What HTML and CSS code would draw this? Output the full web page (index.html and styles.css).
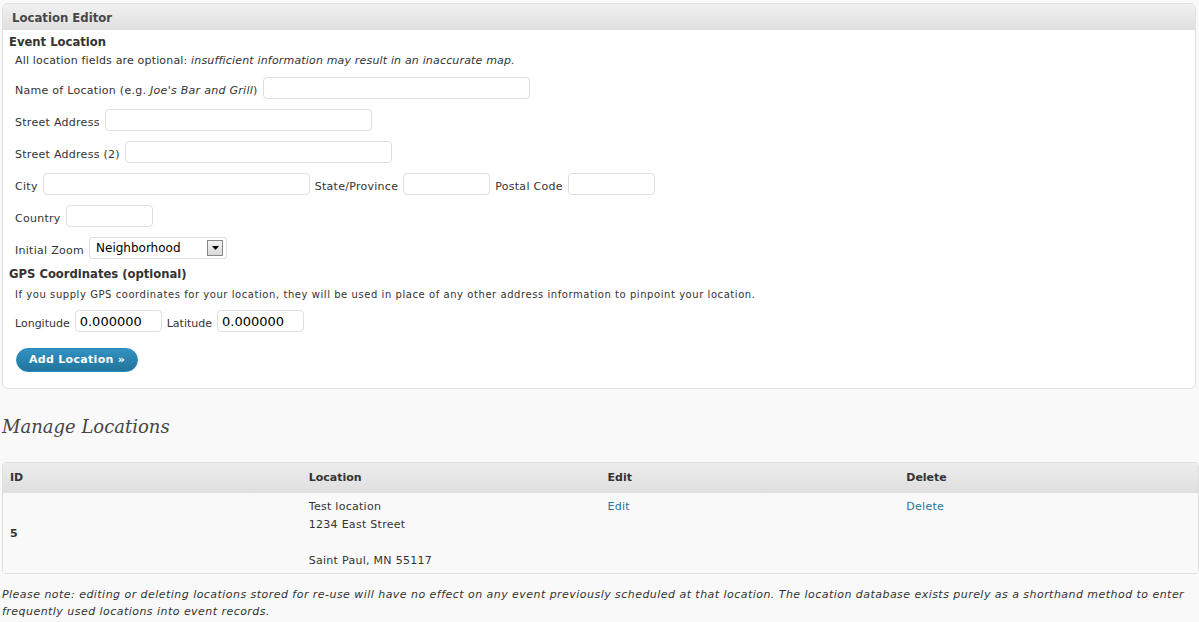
FILE: index.html
```html
<!DOCTYPE html>
<html>
<head>
<meta charset="utf-8">
<link rel="stylesheet" href="styles.css">
</head>
<body>
<div class="editor">
  <div class="editor-head">Location Editor</div>
  <div class="editor-body">
    <div class="section-title">Event Location</div>
    <div class="intro">All location fields are optional: <em>insufficient information may result in an inaccurate map.</em></div>
    <div class="row first">
      <label class="lbl">Name of Location (e.g. <em>Joe's Bar and Grill</em>)</label>
      <span class="input wide"></span>
    </div>
    <div class="row">
      <label class="lbl">Street Address</label>
      <span class="input wide"></span>
    </div>
    <div class="row">
      <label class="lbl">Street Address (2)</label>
      <span class="input wide"></span>
    </div>
    <div class="row">
      <label class="lbl">City</label>
      <span class="input wide"></span>
      <label class="lbl">State/Province</label>
      <span class="input small"></span>
      <label class="lbl">Postal Code</label>
      <span class="input small"></span>
    </div>
    <div class="row">
      <label class="lbl">Country</label>
      <span class="input small"></span>
    </div>
    <div class="row select-row">
      <label class="lbl">Initial Zoom</label>
      <span class="select"><span class="select-text">Neighborhood</span><span class="select-btn"><svg width="7" height="4" viewBox="0 0 7 4"><path d="M0 0h7L3.5 4z" fill="#000"/></svg></span></span>
    </div>
    <div class="section-title gps">GPS Coordinates (optional)</div>
    <div class="gps-note">If you supply GPS coordinates for your location, they will be used in place of any other address information to pinpoint your location.</div>
    <div class="row coords">
      <label class="lbl">Longitude</label>
      <span class="input coord">0.000000</span>
      <label class="lbl">Latitude</label>
      <span class="input coord">0.000000</span>
    </div>
    <div class="actions"><span class="button">Add Location &raquo;</span></div>
  </div>
</div>

<h2 class="page-title">Manage Locations</h2>

<table class="locations">
  <thead>
    <tr><th>ID</th><th>Location</th><th>Edit</th><th>Delete</th></tr>
  </thead>
  <tbody>
    <tr>
      <td class="id">5</td>
      <td class="loc">Test location<br>1234 East Street<br><br>Saint Paul, MN 55117</td>
      <td class="act"><a href="#">Edit</a></td>
      <td class="act"><a href="#">Delete</a></td>
    </tr>
  </tbody>
</table>

<p class="note">Please note: editing or deleting locations stored for re-use will have no effect on any event previously scheduled at that location. The location database exists purely as a shorthand method to enter frequently used locations into event records.</p>
</body>
</html>
```
FILE: styles.css
```css
html, body {
  margin: 0;
  padding: 0;
}
body {
  background: #f9f9f9;
  color: #333;
  font-family: "DejaVu Sans", Verdana, sans-serif;
  font-size: 11px;
  letter-spacing: 0.28px;
  padding: 3px 0 0 2px;
}
.editor {
  margin-right: 3px;
  background: #fff;
  border: 1px solid #dfdfdf;
  border-radius: 6px;
}
.editor-head {
  height: 26px;
  line-height: 28px;
  padding: 0 9px;
  font-size: 11.7px;
  font-weight: bold;
  letter-spacing: 0;
  color: #464646;
  background: linear-gradient(#f1f1f1, #dfdfdf);
  border-radius: 5px 5px 0 0;
}
.editor-body {
  padding: 4px 6px 16px 6px;
}
.section-title {
  font-size: 11.6px;
  font-weight: bold;
  line-height: 16px;
  letter-spacing: 0;
  color: #333;
}
.intro {
  margin-top: 3px;
  padding-left: 6px;
  line-height: 16px;
  letter-spacing: 0.17px;
}
.row {
  display: flex;
  align-items: center;
  gap: 5px;
  height: 22px;
  margin-top: 10px;
  padding-left: 6px;
}
.row.first {
  margin-top: 8px;
}
.row.select-row {
  margin-top: 10px;
}
.lbl {
  padding-top: 5px;
}
.input {
  box-sizing: border-box;
  height: 22px;
  border: 1px solid #dfdfdf;
  border-radius: 4px;
  background: #fff;
  display: inline-flex;
  align-items: center;
  padding: 0 4px;
  font-size: 13px;
  letter-spacing: 0;
  color: #000;
}
.input.wide {
  width: 267px;
}
.input.small {
  width: 87px;
}
.input.coord {
  width: 87px;
}
.coords .lbl {
  letter-spacing: 0;
}
.select {
  box-sizing: border-box;
  width: 138px;
  height: 22px;
  border: 1px solid #dfdfdf;
  border-radius: 3px;
  display: inline-flex;
  align-items: center;
  justify-content: space-between;
  padding: 0 3px 0 6px;
  font-size: 12px;
  letter-spacing: 0;
  color: #000;
}
.select-btn {
  box-sizing: border-box;
  width: 16px;
  height: 16px;
  border: 1px solid #888;
  background: linear-gradient(#f4f4f4, #d8d8d8);
  display: inline-flex;
  align-items: center;
  justify-content: center;
}
.section-title.gps {
  margin-top: 7px;
}
.gps-note {
  margin-top: 5px;
  padding-left: 6px;
  font-size: 10px;
  letter-spacing: 0.56px;
  line-height: 16px;
}
.row.coords {
  margin-top: 7px;
}
.actions {
  margin-top: 16px;
  padding-left: 7px;
  display: flex;
}
.button {
  display: inline-block;
  height: 24px;
  line-height: 22px;
  padding: 0 12px;
  border-radius: 12px;
  border: 1px solid #298cba;
  box-sizing: border-box;
  background: linear-gradient(#3391c2, #21759b);
  color: #fff;
  font-weight: bold;
  font-size: 11px;
  letter-spacing: 0.3px;
}
.page-title {
  margin: 22px 0 0 0;
  font-family: "DejaVu Serif", Georgia, serif;
  font-style: italic;
  font-weight: normal;
  font-size: 18px;
  letter-spacing: 0;
  line-height: 32px;
  color: #464646;
}
.locations {
  margin-top: 19px;
  width: 1197px;
  table-layout: fixed;
  border-collapse: separate;
  border-spacing: 0;
  border: 1px solid #dfdfdf;
  border-radius: 4px;
}
.locations th {
  height: 29px;
  padding: 0 7px 1px 7px;
  text-align: left;
  font-weight: bold;
  letter-spacing: 0;
  color: #333;
  background: linear-gradient(#ececec, #dfdfdf);
}
.locations td {
  padding: 5px 7px 3px 7px;
  line-height: 18px;
  vertical-align: top;
  background: #f9f9f9;
}
.locations td.id {
  vertical-align: middle;
  font-weight: bold;
}
.locations a {
  color: #21759b;
  text-decoration: none;
}
.note {
  margin: 12px 0 0 0;
  font-style: italic;
  line-height: 17px;
  letter-spacing: 0.46px;
  padding-right: 8px;
}
```
